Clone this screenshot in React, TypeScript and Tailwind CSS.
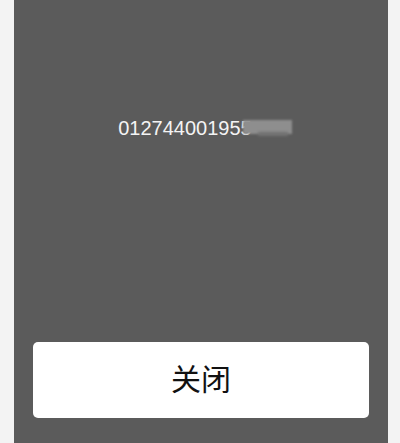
import React from "react";

export default function App() {
  return (
    <div className="w-[400px] h-[443px] bg-[#f3f3f3] flex overflow-hidden">
      <div className="ml-[14px] w-[374px] h-full bg-[#5b5b5b] flex flex-col">
        <div className="mt-[118px] flex justify-center pl-[8px]">
          <div className="relative text-[20px] leading-[20px] text-[#f4f4f4] font-['Liberation_Sans',Arial,sans-serif]">
            <span>012744001955</span>
            <span className="inline-block w-[40px]" />
            {/* masked tail of the number */}
            <span className="absolute left-[125px] top-[2px] w-[49px] h-[14px] bg-[#8e8e8e] blur-[1px]" />
            <span className="absolute left-[140px] top-[14px] w-[30px] h-[4px] bg-[#727272] blur-[1.5px]" />
          </div>
        </div>
        <button className="mt-auto mb-[25px] mx-[19px] h-[76px] pb-[6px] rounded-[5px] bg-white flex items-center justify-center text-[30px] text-[#111] font-['Noto_Sans_CJK_SC','Noto_Sans',sans-serif]">
          关闭
        </button>
      </div>
    </div>
  );
}
